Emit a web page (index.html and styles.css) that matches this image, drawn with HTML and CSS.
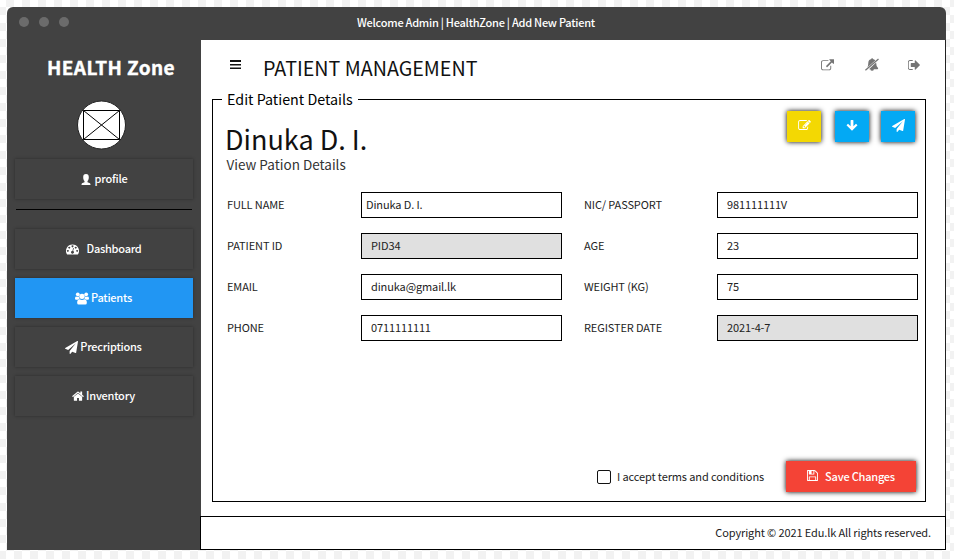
FILE: index.html
```html
<!DOCTYPE html>
<html lang="en">
<head>
<meta charset="utf-8">
<title>HealthZone</title>
<link rel="stylesheet" href="styles.css">
</head>
<body>
<svg class="defs" aria-hidden="true">
  <symbol id="plane" viewBox="0 0 1792 1792"><path d="M1764 11q33 24 27 64l-256 1536q-5 29-32 45-14 8-31 8-11 0-24-5l-453-185-242 295q-18 23-49 23-13 0-22-4-19-7-30.5-23.5t-11.5-36.5v-349l864-1059-1069 925-395-162q-37-14-40-55-2-40 32-59l1664-960q15-9 32-9 20 0 36 11z"/></symbol>
</svg>
<div class="window">
  <header class="titlebar">
    <div class="dots"><i></i><i></i><i></i></div>
    <div class="title">Welcome Admin | HealthZone | Add New Patient</div>
  </header>
  <div class="body">
    <aside class="sidebar">
      <div class="brand">HEALTH Zone</div>
      <svg class="avatar" viewBox="0 0 50 50"><circle cx="25.500" cy="25" r="24" fill="#fff" stroke="#222"/><path d="M7.500 10.500h36v29h-36zl36 29M7.500 39.500l36-29" fill="none" stroke="#000"/></svg>
      <a class="nav profile"><svg class="i-user" viewBox="0 0 10 11"><path d="M5 0C7 0 7.800 1.200 7.800 3.200C7.800 5 7.300 6.300 6.500 7v1.200L9 9.200Q9.500 9.600 9.500 11h-9Q.5 9.600 1 9.200L3.500 8.200V7C2.700 6.300 2.200 5 2.200 3.200C2.200 1.200 3 0 5 0z"/></svg><span>profile</span></a>
      <hr>
      <a class="nav dash"><svg class="i-dash" viewBox="0 0 14 11"><path fill-rule="evenodd" d="M7 0a7 7 0 0 1 6 10.600q-.2.400-.7.400H1.700q-.5 0-.7-.4A7 7 0 0 1 7 0zM7 1a1 1 0 1 0 .01 0zM3.500 2.500a1 1 0 1 0 .01 0zM10.500 2.500a1 1 0 1 0 .01 0zM2 6a1 1 0 1 0 .01 0zM12 6a1 1 0 1 0 .01 0zM7.700 3.800L6.900 7a1.500 1.500 0 1 0 .8.200l.8-3.200z"/></svg><span>Dashboard</span></a>
      <a class="nav active"><svg class="i-users" viewBox="0 0 15 13"><circle cx="3" cy="2" r="2"/><circle cx="12" cy="2" r="2"/><circle cx="7.500" cy="4.200" r="2.900"/><path d="M1 4.300q2 .8 3.200 0Q4.200 5.800 5 6.900Q3.800 7 3 7.900H1.200Q0 7.900 0 6.800Q0 4.700 1 4.300zM14 4.300q-2 .8-3.200 0q0 1.500-.8 2.600q1.200.1 2 1h1.800Q15 7.900 15 6.800Q15 4.700 14 4.300zM4.900 7.200q2.600 1.700 5.200 0Q12.700 7.200 12.700 11Q12.700 13 11 13H4Q2.300 13 2.300 11Q2.300 7.200 4.900 7.200z"/></svg><span>Patients</span></a>
      <a class="nav"><svg class="i-plane"><use href="#plane"/></svg><span>Precriptions</span></a>
      <a class="nav"><svg class="i-home" viewBox="64 200 1664 1350"><path d="M1472 992v480q0 26-19 45t-45 19h-384v-384h-256v384h-384q-26 0-45-19t-19-45v-480q0-1 .5-3t.5-3l575-474 575 474q1 2 1 6zm223-69l-62 74q-8 9-21 11h-3q-13 0-21-7l-692-577-692 577q-12 8-24 7-13-2-21-11l-62-74q-8-10-7-23.500t11-21.500l719-599q32-26 76-26t76 26l244 204v-195q0-14 9-23t23-9h192q14 0 23 9t9 23v408l219 182q10 8 11 21.500t-7 23.500z"/></svg><span>Inventory</span></a>
    </aside>
    <div class="page">
      <div class="topbar">
        <svg class="i-bars" viewBox="0 0 11 10"><path d="M0 0h11v2H0zM0 4h11v1.500H0zM0 7.500h11v1.500H0z"/></svg>
        <h1>PATIENT MANAGEMENT</h1>
        <svg class="i-ext" viewBox="0 0 1792 1600"><path d="M1408 928v320q0 119-84.500 203.500t-203.500 84.500h-832q-119 0-203.500-84.500t-84.500-203.500v-832q0-119 84.500-203.500t203.500-84.500h704q14 0 23 9t9 23v64q0 14-9 23t-23 9h-704q-66 0-113 47t-47 113v832q0 66 47 113t113 47h832q66 0 113-47t47-113v-320q0-14 9-23t23-9h64q14 0 23 9t9 23zm384-864v512q0 26-19 45t-45 19-45-19l-176-176-652 652q-10 10-23 10t-23-10l-114-114q-10-10-10-23t10-23l652-652-176-176q-19-19-19-45t19-45 45-19h512q26 0 45 19t19 45z"/></svg>
        <svg class="i-bell" viewBox="0 0 14 13"><path d="M6.400 1Q6.400 0 7.100 0t.7 1Q9.400 1.300 10.300 2.500L2.200 9.400Q3.300 8 3.300 5Q3.300 1.700 6.400 1zM11.100 4.600Q11.100 8.600 13.200 10.300Q13.200 11.200 12.300 11.200H8.900Q8.700 12.800 7.100 12.800T5.300 11.200H4z"/><path d="M.4 12.300L13.500.9" fill="none" stroke="currentColor" stroke-width="1.300"/></svg>
        <svg class="i-out" viewBox="96 256 1536 1280"><path d="M704 1440q0 4 1 20t.5 26.500-3 23.500-10 19.500-20.500 6.500h-320q-119 0-203.500-84.500t-84.500-203.500v-704q0-119 84.500-203.500t203.500-84.500h320q13 0 22.500 9.500t9.500 22.500q0 4 1 20t.5 26.500-3 23.500-10 19.500-20.500 6.500h-320q-66 0-113 47t-47 113v704q0 66 47 113t113 47h312l11.500 1 11.500 3 8 5.500 7 9 2 13.500zm928-544q0 26-19 45l-544 544q-19 19-45 19t-45-19-19-45v-288h-448q-26 0-45-19t-19-45v-384q0-26 19-45t45-19h448v-288q0-26 19-45t45-19 45 19l544 544q19 19 19 45z"/></svg>
      </div>
      <fieldset class="panel">
        <legend>Edit Patient Details</legend>
        <div class="content">
          <div class="head">
            <div>
              <h2>Dinuka D. I.</h2>
              <p>View Pation Details</p>
            </div>
            <div class="actions">
              <button class="btn yellow" type="button"><svg class="i-edit" viewBox="0 128 1792 1408"><path d="M888 1184l116-116-152-152-116 116v56h96v96h56zm440-720q-16-16-33 1l-350 350q-17 17-1 33t33-1l350-350q17-17 1-33zm80 594v190q0 119-84.500 203.500t-203.500 84.500h-832q-119 0-203.500-84.500t-84.500-203.500v-832q0-119 84.500-203.500t203.500-84.500h832q63 0 117 25 15 7 18 23 3 17-9 29l-49 49q-14 14-32 8-23-6-45-6h-832q-66 0-113 47t-47 113v832q0 66 47 113t113 47h832q66 0 113-47t47-113v-126q0-13 9-22l64-64q15-15 35-7t20 29zm-96-738l288 288-672 672h-288v-288zm444 132l-92 92-288-288 92-92q28-28 68-28t68 28l152 152q28 28 28 68t-28 68z"/></svg></button>
              <button class="btn" type="button"><svg class="i-down" viewBox="0 0 12 11"><path d="M5 0h2q.4 0 .4.400V6.200L10 3.800l1.500 1.500L6 10.800L.5 5.300L2 3.800l2.600 2.400V.4Q4.600 0 5 0z"/></svg></button>
              <button class="btn" type="button"><svg class="i-plane"><use href="#plane"/></svg></button>
            </div>
          </div>
          <div class="form">
            <label>FULL NAME</label><div class="field tight">Dinuka D. I.</div>
            <label>NIC/ PASSPORT</label><div class="field">981111111V</div>
            <label>PATIENT ID</label><div class="field locked">PID34</div>
            <label>AGE</label><div class="field">23</div>
            <label>EMAIL</label><div class="field">dinuka@gmail.lk</div>
            <label>WEIGHT (KG)</label><div class="field">75</div>
            <label>PHONE</label><div class="field">0711111111</div>
            <label>REGISTER DATE</label><div class="field locked">2021-4-7</div>
          </div>
          <div class="submit">
            <span class="box"></span><span class="terms">I accept terms and conditions</span>
            <button class="save" type="button"><svg class="i-save" viewBox="128 128 1536 1536"><path d="M512 1536h768v-384h-768v384zm896 0h128v-896q0-14-10-38.500t-20-34.500l-281-281q-10-10-34-20t-39-10v416q0 40-28 68t-68 28h-576q-40 0-68-28t-28-68v-416h-128v1280h128v-416q0-40 28-68t68-28h832q40 0 68 28t28 68v416zm-384-928v-320q0-13-9.500-22.500t-22.500-9.500h-192q-13 0-22.500 9.500t-9.500 22.500v320q0 13 9.500 22.500t22.500 9.500h192q13 0 22.500-9.500t9.500-22.500zm640 32v928q0 40-28 68t-68 28h-1344q-40 0-68-28t-28-68v-1344q0-40 28-68t68-28h928q40 0 88 20t76 48l280 280q28 28 48 76t20 88z"/></svg><span>Save Changes</span></button>
          </div>
        </div>
      </fieldset>
      <footer>Copyright © 2021 Edu.lk All rights reserved.</footer>
    </div>
  </div>
</div>
</body>
</html>
```
FILE: styles.css
```css
* { box-sizing: border-box; }
body {
  margin: 0;
  padding: 7px 8px 9px 7px;
  height: 559px;
  overflow: hidden;
  font-family: "Noto Sans CJK JP", "Noto Sans", sans-serif;
  font-size: 11px;
  letter-spacing: -.12px;
  color: #222;
  background-color: #fff;
  background-image: conic-gradient(#f2f2f2 25%, #fff 0 50%, #f2f2f2 0 75%, #fff 0);
  background-size: 16px 16px;
  background-position: -2px -1px;
}
h1, h2, p { margin: 0; font-weight: 400; white-space: nowrap; letter-spacing: 0; }
svg { display: block; fill: currentColor; flex: none; }
.defs { position: absolute; width: 0; height: 0; }
.window { width: 939px; height: 543px; background: #424242; border-radius: 6px 6px 0 0; display: flex; flex-direction: column; }
.titlebar { height: 33px; flex: none; display: grid; grid-template-columns: 180px 1fr 180px; align-items: center; }
.dots { display: flex; gap: 10px; padding-left: 11.5px; margin-top: -3px; }
.dots i { width: 10px; height: 10px; border-radius: 50%; background: #6b6b6b; }
.title { color: #fff; text-align: center; font-weight: 500; line-height: 16px; margin: -3px 1px 0 0; white-space: nowrap; letter-spacing: -.25px; }
.body { flex: 1; display: flex; min-height: 0; }
.sidebar { width: 193px; flex: none; padding: 0 7px 0 8px; display: flex; flex-direction: column; color: #fff; }
.brand { font-weight: 700; font-size: 19px; line-height: 28px; margin: 13px 0 0 32px; white-space: nowrap; letter-spacing: .4px; -webkit-text-stroke: .4px #fff; }
.avatar { width: 50px; height: 50px; margin: 19px 0 9px 61px; }
.nav { height: 40px; flex: none; margin-bottom: 9px; padding: 0 1px 1px 0; display: flex; align-items: center; justify-content: center; gap: 2px; font-weight: 500; line-height: 16px; letter-spacing: -.24px; box-shadow: 0 0 3px rgba(0, 0, 0, .35); }
.nav span { margin-top: -1px; }
.nav svg { margin-top: 1px; }
.nav.profile { gap: 4px; margin-bottom: 10px; padding-right: 0; }
.nav.dash { gap: 7px; padding-right: 0; }
.nav.active { background: #2196f3; }
.sidebar hr { width: 176px; height: 1px; border: 0; background: #000; margin: 0 0 19px 1px; flex: none; }
.i-user { width: 10px; height: 11px; }
.i-dash { width: 13px; height: 11px; }
.i-users { width: 14px; height: 13px; }
.i-plane { width: 13px; height: 13px; }
.i-home { width: 12px; height: 10px; }
.page { flex: 1; background: #fff; border-right: 1px solid #222; display: flex; flex-direction: column; margin-left: 1px; }
.topbar { height: 50px; flex: none; display: flex; align-items: center; padding: 0 25px 0 29px; color: #757575; }
.i-bars { width: 11px; height: 10px; color: #111; }
.topbar h1 { font-size: 19.700px; line-height: 28px; color: #111; margin: 5px auto 0 22px; }
.i-ext { width: 13px; height: 12px; margin: 0 31px 1px 0; }
.i-bell { width: 14px; height: 13px; margin: 0 29px 1px 0; }
.i-out { width: 12px; height: 10px; }
.panel { width: 714px; height: 412px; margin: 0 0 0 11px; padding: 0; border: 1px solid #000; flex: none; min-width: 0; }
.panel legend { margin-left: 9px; padding: 0 5px 0 5px; font-size: 14.300px; line-height: 18px; letter-spacing: 0; color: #000; white-space: nowrap; }
.content { height: 393px; display: flex; flex-direction: column; }
.head { display: flex; justify-content: space-between; padding: 3px 10px 0 12px; height: 84px; flex: none; }
.head h2 { font-size: 27px; line-height: 34px; margin-top: 11px; color: #111; }
.head p { font-size: 13.500px; line-height: 18px; margin: -1px 0 0 1.500px; color: #333; }
.actions { display: flex; gap: 12px; }
.btn { width: 34px; height: 31px; border: 0; padding: 0 0 3px; color: #fff; background: #03a9f4; display: flex; align-items: center; justify-content: center; box-shadow: 0 0 5px #000; }
.btn.yellow { background: #f3d803; margin-right: 2px; }
.i-edit { width: 13px; height: 10px; }
.i-down { width: 12px; height: 11px; }
.form { display: grid; grid-template-columns: 134px 201px 155px 201px; row-gap: 15px; padding-left: 14px; align-items: center; }
.form label { line-height: 16px; margin-top: -2px; white-space: nowrap; }
.form label:nth-of-type(even) { padding-left: 22px; }
.field { height: 26px; border: 1px solid #000; padding-left: 9px; line-height: 22px; white-space: nowrap; }
.field.tight { padding-left: 4px; }
.field.locked { background: #e0e0e0; }
.submit { margin-top: auto; display: flex; align-items: center; justify-content: flex-end; padding: 0 9px 9px 0; }
.box { width: 14px; height: 14px; border: 1px solid #111; border-radius: 2px; margin-right: 6px; }
.terms { margin: -2px 22px 0 0; white-space: nowrap; }
.save { width: 130px; height: 31px; border: 0; padding: 0 0 2px; background: #f44336; color: #fff; font: 500 11px/16px "Noto Sans CJK JP", sans-serif; letter-spacing: -.22px; display: flex; align-items: center; justify-content: center; gap: 7px; box-shadow: 0 0 5px #000; }
.i-save { width: 11px; height: 11px; }
footer { margin: auto -1px 0 -1px; height: 34px; border: 1px solid #000; padding-right: 14px; text-align: right; line-height: 31px; background: #fff; }
```
